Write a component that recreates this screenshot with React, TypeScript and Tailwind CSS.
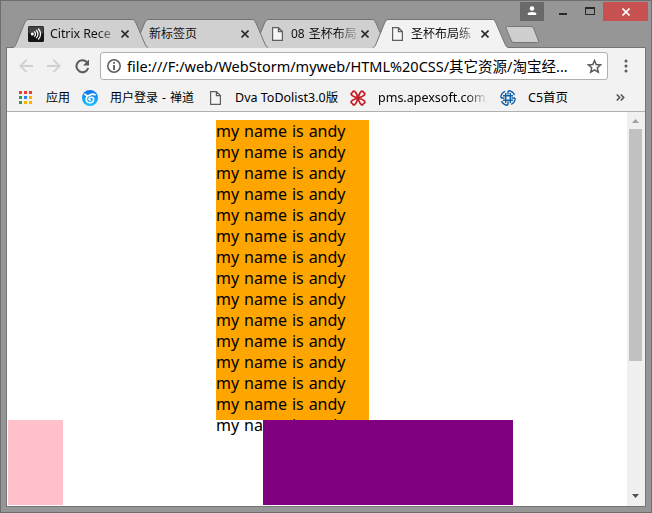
import React from "react";

const ui = "font-['Noto_Sans','Noto_Sans_CJK_SC',sans-serif]";

function PageIcon({ className = "" }: { className?: string }) {
  return (
    <svg width="11" height="14" viewBox="0 0 11 14" className={`shrink-0 ${className}`} fill="#f5f5f5" stroke="#5f5f5f" strokeWidth="1.2">
      <path d="M.6.6H6.4L10.4 4.6V13.4H.6Z M6.4.6V4.6H10.4" />
    </svg>
  );
}

function CitrixIcon() {
  return (
    <svg width="16" height="16" viewBox="0 0 16 16" className="shrink-0">
      <rect width="16" height="16" rx="1.5" fill="#161616" />
      <rect x=".5" y=".5" width="15" height="7" rx="1" fill="#444" />
      <circle cx="4.3" cy="8" r="1.5" fill="#fff" />
      <g fill="none" stroke="#fff" strokeWidth="1.2">
        <path d="M6.300 5.300Q8.600 8 6.300 10.700M8.300 3.800Q11.600 8 8.300 12.200M10.300 2.500Q14.800 8 10.300 13.500" />
      </g>
    </svg>
  );
}

interface TabProps {
  title: string;
  icon?: React.ReactNode;
  active?: boolean;
  layer: string;
  textClass: string;
  fade?: boolean;
}

function Tab({ title, icon, active, layer, textClass, fade }: TabProps) {
  return (
    <div className={`relative -mr-[15px] flex h-[29px] w-[135px] shrink-0 items-center pl-[15px] ${layer}`}>
      <svg width="135" height="29" className="absolute left-0 top-0">
        <path d="M0 28.5C2 28 2 27 3 25L12 3Q13.500 .5 15 .5H120Q121.500 .5 122.500 3L132 25Q133 28 135 28.500V29H0Z" fill={active ? "#f2f2f2" : "#d0d0d0"} />
        <path d="M0 28.500C2 28 2 27 3 25L12 3Q13.500 .5 15 .5H120Q121.500 .5 122.500 3L132 25Q133 28 135 28.500" fill="none" stroke="#747474" />
      </svg>
      <div className="relative flex w-[93px] items-center">
        {icon}
        <span
          className={`block min-w-0 flex-1 overflow-hidden whitespace-nowrap leading-[18px] text-[#111] ${textClass} ${
            fade ? "[mask-image:linear-gradient(to_right,black_calc(100%-24px),transparent)]" : ""
          }`}
        >
          {title}
        </span>
      </div>
      <svg width="8" height="8" viewBox="0 0 8 8" className="relative" stroke="#2c2c2c" strokeWidth="1.6">
        <path d="M.5.5 7.500 7.500M7.500.5.5 7.500" />
      </svg>
    </div>
  );
}

function WindowControls() {
  return (
    <div className="absolute right-[3px] top-px z-50 flex h-[19px]">
      <div className="flex w-6 justify-center bg-[#696969]">
        <svg width="10" height="10" viewBox="0 0 10 10" className="mt-[4px]" fill="#fff">
          <circle cx="5" cy="2.500" r="2.300" />
          <path d="M.8 9V7.500Q1 6 5 6T9.200 7.500V9Z" />
        </svg>
      </div>
      <div className="w-[38px] pl-[15px] pt-[11px]">
        <div className="h-0.5 w-2 bg-[#292929]" />
      </div>
      <div className="w-[21px] pl-[3px] pt-[5px]">
        <div className="h-2 w-2.5 border border-t-2 border-[#292929]" />
      </div>
      <div className="flex w-[45px] items-center justify-center bg-[#c75050]">
        <svg width="8" height="8" viewBox="0 0 8 8" stroke="#fff" strokeWidth="1.600">
          <path d="M.5.5 7.500 7.500M7.500.5.5 7.500" />
        </svg>
      </div>
    </div>
  );
}

function TitleBar() {
  return (
    <header className="relative flex h-[46px] items-start">
      <div className="flex w-[507px] shrink-0 pl-3 pt-[18px]">
        <Tab title="Citrix Rece" icon={<CitrixIcon />} layer="z-30" textClass="ml-1.5 text-[12.5px] tracking-[-0.1px]" fade />
        <Tab title="新标签页" layer="z-20" textClass="ml-px text-[12px]" />
        <Tab title="08 圣杯布局" icon={<PageIcon className="ml-[4px]" />} layer="z-10" textClass="ml-2 text-[12px] [word-spacing:1px]" fade />
        <Tab title="圣杯布局练" icon={<PageIcon className="ml-[4px]" />} active layer="z-40" textClass="ml-2 text-[12px]" fade />
      </div>
      <svg width="36" height="18" className="-ml-1 mt-[25px] shrink-0">
        <path d="M3.500.5H27Q28.500.5 29.500 2L34.500 15Q35 16.500 33.500 16.500H10Q8 16.500 7.500 15L2 2Q1.500.5 3.500.5Z" fill="#cfcfcf" stroke="#777" />
      </svg>
      <WindowControls />
    </header>
  );
}

function Arrow({ flip }: { flip?: boolean }) {
  return (
    <svg width="14" height="14" viewBox="0 0 14 14" className={flip ? "ml-3.5 -scale-x-100" : ""} fill="none" stroke="#d0d0d0" strokeWidth="1.800">
      <path d="M14 7H1.500M7.500.8 1.300 7 7.500 13.200" />
    </svg>
  );
}

function Toolbar() {
  return (
    <div className="flex h-9 items-center pl-3">
      <Arrow />
      <Arrow flip />
      <svg width="15" height="15" viewBox="0 0 15 15" className="ml-3.5 shrink-0">
        <path d="M11.800 3A6 6 0 1 0 13.200 9" fill="none" stroke="#5a5a5a" strokeWidth="2" />
        <path d="M14 .5V6.500H8Z" fill="#5a5a5a" />
      </svg>
      <div className="ml-2.5 flex h-7 w-[508px] shrink-0 items-center rounded-[3px] border border-[#b0b0b0] bg-white pl-1.5">
        <svg width="14" height="14" viewBox="0 0 14 14" className="shrink-0">
          <circle cx="7" cy="7" r="6.200" fill="none" stroke="#5a5a5a" strokeWidth="1.500" />
          <path d="M6.100 3H7.900V4.700H6.100ZM6.100 6H7.900V11H6.100Z" fill="#5a5a5a" />
        </svg>
        <span className="ml-1.5 w-[460px] whitespace-nowrap text-[14.500px] leading-5 text-black">
          file:///F:/web/WebStorm/myweb/HTML%20CSS/其它资源/淘宝经...
        </span>
        <svg width="15" height="15" viewBox="0 0 15 15" className="shrink-0" fill="none" stroke="#5a5a5a" strokeWidth="1.500">
          <path d="M7.500 1.500 9.200 5.500 13.700 5.900 10.300 8.800 11.300 13.200 7.500 10.900 3.700 13.200 4.700 8.800 1.300 5.900 5.800 5.500Z" />
        </svg>
      </div>
      <svg width="4" height="14" viewBox="0 0 4 14" className="ml-[16px]" fill="#5a5a5a">
        <circle cx="2" cy="2" r="1.500" />
        <circle cx="2" cy="7" r="1.500" />
        <circle cx="2" cy="12" r="1.500" />
      </svg>
    </div>
  );
}

function Bookmarks() {
  return (
    <nav className="flex h-[28px] items-center whitespace-nowrap border-b border-[#b0b0b0] pl-3 text-[12px] leading-4 text-black">
      <div className="grid w-[13px] grid-cols-3 gap-0.5">
        <i className="size-[3px] bg-[#e93e30]" /><i className="size-[3px] bg-[#e93e30]" /><i className="size-[3px] bg-[#e93e30]" />
        <i className="size-[3px] bg-[#30a050]" /><i className="size-[3px] bg-[#2684fc]" /><i className="size-[3px] bg-[#fbb300]" />
        <i className="size-[3px] bg-[#30a050]" /><i className="size-[3px] bg-[#fbb300]" /><i className="size-[3px] bg-[#fbb300]" />
      </div>
      <span className="ml-[14px] w-9">应用</span>
      <svg width="16" height="16" viewBox="0 0 16 16" className="shrink-0">
        <defs>
          <linearGradient id="swirl" x2="0" y2="1">
            <stop stopColor="#1070ef" />
            <stop offset="1" stopColor="#18c5ff" />
          </linearGradient>
        </defs>
        <circle cx="8" cy="8" r="8" fill="url(#swirl)" />
        <g fill="none" stroke="#fff" strokeLinecap="round">
          <path d="M2.800 4.300Q5 6.800 8 5Q10.500 3.400 13 4.800" strokeWidth="1.700" />
          <path d="M5 6.500C2.500 11 6 13.300 8.800 12.700C12.500 12 12.600 7.500 9.500 7.200C6.500 7 6.300 10.300 8.500 10" strokeWidth="1.600" />
        </g>
      </svg>
      <span className="ml-3 w-[100px] [word-spacing:0.9px]">用户登录 - 禅道</span>
      <PageIcon />
      <span className="ml-[14px] w-[115px] text-[12.500px]">Dva ToDolist3.0版</span>
      <svg width="16" height="16" viewBox="0 0 16 16" className="shrink-0" fill="none" stroke="#c51b22" strokeWidth="1.700">
        <path d="M8 8C4 7 0 5 1.500 3Q3 2.800 3 1.500C5 0 7 4 8 8C9 4 11 0 13 1.500Q13 2.800 14.500 3C16 5 12 7 8 8C12 9 16 11 14.500 13Q13 13.200 13 14.500C11 16 9 12 8 8C7 12 5 16 3 14.500Q3 13.200 1.500 13C0 11 4 9 8 8" />
      </svg>
      <span className="ml-3 w-[110px] text-[12.500px] [mask-image:linear-gradient(to_right,black_88px,transparent)]">pms.apexsoft.com.c</span>
      <svg width="16" height="16" viewBox="0 0 16 16" className="ml-3 shrink-0" fill="none" stroke="#1060aa" strokeWidth="1.400">
        <circle cx="8" cy="8" r="7.200" strokeDasharray="8 3.300" />
        <path d="M5.700 3V13M10.300 3V13M3 5.700H13M3 10.300H13M8 1V4.500M8 11.500V15M1 8H4.500M11.500 8H15" />
      </svg>
      <span className="ml-3 text-[12.500px]">C5首页</span>
      <svg width="9" height="7" viewBox="0 0 9 7" className="ml-auto mr-[20px]" fill="none" stroke="#555" strokeWidth="1.600">
        <path d="M.8.5 3.700 3.500.8 6.500M4.800.5 7.700 3.500 4.800 6.500" />
      </svg>
    </nav>
  );
}

const lines = Array.from({ length: 15 }, () => "my name is andy");

function Page() {
  return (
    <div className="flex h-[394px] bg-white">
      <main className="flex h-[393px] w-[620px] flex-col overflow-hidden pl-px pt-2">
        <div className="ml-[208px] h-[300px] w-[153px] shrink-0 bg-[#ffa500] pt-px text-[16px] leading-[21px] text-black [word-spacing:0.8px]">
          {lines.map((line, i) => (
            <p key={i} className="whitespace-nowrap">{line}</p>
          ))}
        </div>
        <div className="z-10 flex h-[85px] shrink-0">
          <div className="w-[55px] bg-[#ffc0cb]" />
          <div className="ml-[200px] w-[250px] bg-[#800080]" />
        </div>
      </main>
      <div className="flex w-[18px] flex-col items-start bg-[#f0f0f0] pl-[2px]">
        <svg width="7" height="4" className="ml-[3px] mt-[7px] shrink-0" fill="#a0a0a0"><path d="M0 4 3.500 0 7 4Z" /></svg>
        <div className="mt-[6px] h-[232px] w-[13px] shrink-0 bg-[#c1c1c1]" />
        <svg width="7" height="4" className="mb-2 ml-[3px] mt-auto shrink-0" fill="#505050"><path d="M0 0H7L3.500 4Z" /></svg>
      </div>
    </div>
  );
}

export default function App() {
  return (
    <div className={`h-[513px] w-[652px] overflow-hidden border border-[#6e6e6e] bg-[#969696] ${ui}`}>
      <TitleBar />
      <div className="ml-[5px] h-[460px] w-[640px] border border-[#747474] bg-[#f2f2f2]">
        <Toolbar />
        <Bookmarks />
        <Page />
      </div>
    </div>
  );
}
